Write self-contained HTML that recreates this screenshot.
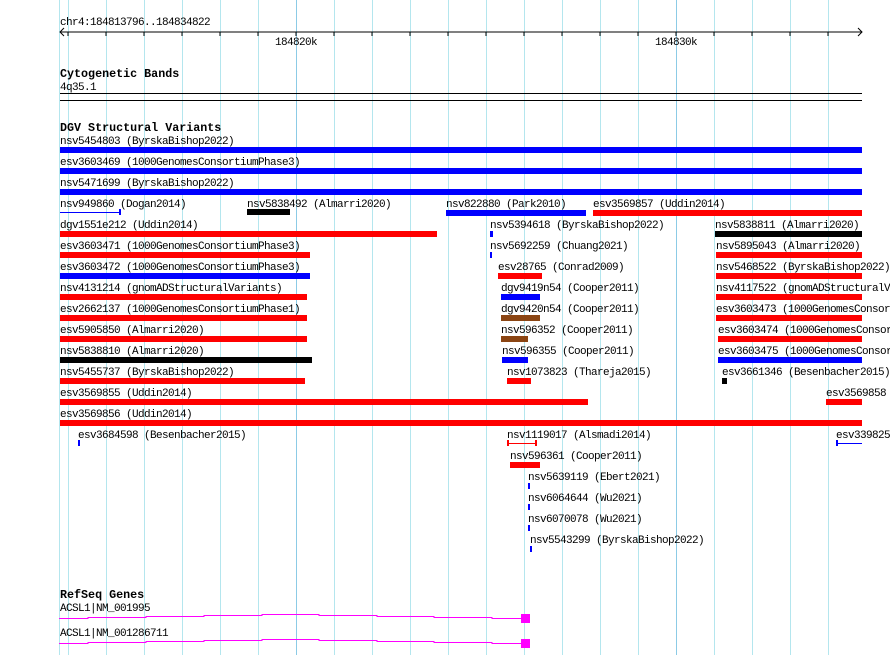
<!DOCTYPE html>
<html><head><meta charset="utf-8"><style>
body{margin:0;background:#fff;width:890px;height:655px;overflow:hidden;position:relative;font-family:"Liberation Mono",monospace;font-size:11px;color:#000}
.g{position:absolute;top:0;height:655px;width:1px;background:#b4e6ee}
.gd{background:#8ccbe6}
.t{position:absolute;line-height:10px;white-space:pre;letter-spacing:-0.6px;margin-top:2px;font-size:11px}
.h{position:absolute;font-family:"Liberation Mono",monospace;font-weight:bold;font-size:11.7px;line-height:11px;margin-top:1px}
.b{position:absolute;height:6px}
.R{background:#f00}.B{background:#00f}.K{background:#000}.N{background:#8b4513}
svg{shape-rendering:crispEdges}
</style></head><body>
<div class="g" style="left:59px"></div>
<div class="g" style="left:68px"></div><div class="g" style="left:106px"></div><div class="g" style="left:144px"></div><div class="g" style="left:182px"></div><div class="g" style="left:220px"></div><div class="g" style="left:258px"></div><div class="g gd" style="left:296px"></div><div class="g" style="left:334px"></div><div class="g" style="left:372px"></div><div class="g" style="left:410px"></div><div class="g" style="left:448px"></div><div class="g" style="left:486px"></div><div class="g" style="left:524px"></div><div class="g" style="left:562px"></div><div class="g" style="left:600px"></div><div class="g" style="left:638px"></div><div class="g gd" style="left:676px"></div><div class="g" style="left:714px"></div><div class="g" style="left:752px"></div><div class="g" style="left:790px"></div><div class="g" style="left:828px"></div>

<div class="t" style="left:60px;top:16px">chr4:184813796..184834822</div>
<svg style="position:absolute;left:0;top:0" width="890" height="110">
<line x1="60" y1="32" x2="862" y2="32" stroke="#000"/>
<path d="M64 28 L60 32 L64 36 M858 28 L862 32 L858 36" stroke="#000" fill="none" shape-rendering="auto"/>
<g stroke="#000"><path d="M68 32v4M106 32v4M144 32v4M182 32v4M220 32v4M258 32v4M296 32v4M334 32v4M372 32v4M410 32v4M448 32v4M486 32v4M524 32v4M562 32v4M600 32v4M638 32v4M676 32v4M714 32v4M752 32v4M790 32v4M828 32v4"/></g>
<rect x="60" y="93" width="802" height="1" fill="#000"/><rect x="60" y="100" width="802" height="1" fill="#000"/>
</svg>
<div class="t" style="left:275px;top:36px">184820k</div>
<div class="t" style="left:655px;top:36px">184830k</div>
<div class="h" style="left:60px;top:68px">Cytogenetic Bands</div>
<div class="t" style="left:60px;top:81px">4q35.1</div>
<div class="h" style="left:60px;top:122px">DGV Structural Variants</div>

<div class="t" style="left:60px;top:135px">nsv5454803 (ByrskaBishop2022)</div><div class="b B" style="left:60px;width:802px;top:147px"></div>
<div class="t" style="left:60px;top:156px">esv3603469 (1000GenomesConsortiumPhase3)</div><div class="b B" style="left:60px;width:802px;top:168px"></div>
<div class="t" style="left:60px;top:177px">nsv5471699 (ByrskaBishop2022)</div><div class="b B" style="left:60px;width:802px;top:189px"></div>

<div class="t" style="left:60px;top:198px">nsv949860 (Dogan2014)</div><div style="position:absolute;left:60px;width:60px;top:212px;height:1px;background:#00f"></div><div style="position:absolute;left:119px;width:2px;top:209px;height:6px;background:#00f"></div>
<div class="t" style="left:247px;top:198px">nsv5838492 (Almarri2020)</div><div class="b K" style="left:247px;width:43px;top:209px"></div>
<div class="t" style="left:446px;top:198px">nsv822880 (Park2010)</div><div class="b B" style="left:446px;width:140px;top:210px"></div>
<div class="t" style="left:593px;top:198px">esv3569857 (Uddin2014)</div><div class="b R" style="left:593px;width:269px;top:210px"></div>

<div class="t" style="left:60px;top:219px">dgv1551e212 (Uddin2014)</div><div class="b R" style="left:60px;width:377px;top:231px"></div>
<div class="t" style="left:490px;top:219px">nsv5394618 (ByrskaBishop2022)</div><div class="b B" style="left:490px;width:3px;top:231px"></div>
<div class="t" style="left:715px;top:219px">nsv5838811 (Almarri2020)</div><div class="b K" style="left:715px;width:147px;top:231px"></div>

<div class="t" style="left:60px;top:240px">esv3603471 (1000GenomesConsortiumPhase3)</div><div class="b R" style="left:60px;width:250px;top:252px"></div>
<div class="t" style="left:490px;top:240px">nsv5692259 (Chuang2021)</div><div class="b B" style="left:490px;width:2px;top:252px"></div>
<div class="t" style="left:716px;top:240px">nsv5895043 (Almarri2020)</div><div class="b R" style="left:716px;width:146px;top:252px"></div>

<div class="t" style="left:60px;top:261px">esv3603472 (1000GenomesConsortiumPhase3)</div><div class="b B" style="left:60px;width:250px;top:273px"></div>
<div class="t" style="left:498px;top:261px">esv28765 (Conrad2009)</div><div class="b R" style="left:498px;width:44px;top:273px"></div>
<div class="t" style="left:716px;top:261px">nsv5468522 (ByrskaBishop2022)</div><div class="b R" style="left:716px;width:146px;top:273px"></div>

<div class="t" style="left:60px;top:282px">nsv4131214 (gnomADStructuralVariants)</div><div class="b R" style="left:60px;width:247px;top:294px"></div>
<div class="t" style="left:501px;top:282px">dgv9419n54 (Cooper2011)</div><div class="b B" style="left:501px;width:39px;top:294px"></div>
<div class="t" style="left:716px;top:282px">nsv4117522 (gnomADStructuralV</div><div class="b R" style="left:716px;width:146px;top:294px"></div>

<div class="t" style="left:60px;top:303px">esv2662137 (1000GenomesConsortiumPhase1)</div><div class="b R" style="left:60px;width:247px;top:315px"></div>
<div class="t" style="left:501px;top:303px">dgv9420n54 (Cooper2011)</div><div class="b N" style="left:501px;width:39px;top:315px"></div>
<div class="t" style="left:716px;top:303px">esv3603473 (1000GenomesConsor</div><div class="b R" style="left:716px;width:146px;top:315px"></div>

<div class="t" style="left:60px;top:324px">esv5905850 (Almarri2020)</div><div class="b R" style="left:60px;width:247px;top:336px"></div>
<div class="t" style="left:501px;top:324px">nsv596352 (Cooper2011)</div><div class="b N" style="left:501px;width:27px;top:336px"></div>
<div class="t" style="left:718px;top:324px">esv3603474 (1000GenomesConsor</div><div class="b R" style="left:718px;width:144px;top:336px"></div>

<div class="t" style="left:60px;top:345px">nsv5838810 (Almarri2020)</div><div class="b K" style="left:60px;width:252px;top:357px"></div>
<div class="t" style="left:502px;top:345px">nsv596355 (Cooper2011)</div><div class="b B" style="left:502px;width:26px;top:357px"></div>
<div class="t" style="left:718px;top:345px">esv3603475 (1000GenomesConsor</div><div class="b B" style="left:718px;width:144px;top:357px"></div>

<div class="t" style="left:60px;top:366px">nsv5455737 (ByrskaBishop2022)</div><div class="b R" style="left:60px;width:245px;top:378px"></div>
<div class="t" style="left:507px;top:366px">nsv1073823 (Thareja2015)</div><div class="b R" style="left:507px;width:24px;top:378px"></div>
<div class="t" style="left:722px;top:366px">esv3661346 (Besenbacher2015)</div><div class="b K" style="left:722px;width:5px;top:378px"></div>

<div class="t" style="left:60px;top:387px">esv3569855 (Uddin2014)</div><div class="b R" style="left:60px;width:528px;top:399px"></div>
<div class="t" style="left:826px;top:387px">esv3569858</div><div class="b R" style="left:826px;width:36px;top:399px"></div>

<div class="t" style="left:60px;top:408px">esv3569856 (Uddin2014)</div><div class="b R" style="left:60px;width:802px;top:420px"></div>

<div class="t" style="left:78px;top:429px">esv3684598 (Besenbacher2015)</div><div class="b B" style="left:78px;width:2px;top:440px"></div>
<div class="t" style="left:507px;top:429px">nsv1119017 (Alsmadi2014)</div>
<div style="position:absolute;left:508px;width:27px;top:443px;height:1px;background:#f00"></div><div style="position:absolute;left:507px;width:2px;top:440px;height:6px;background:#f00"></div><div style="position:absolute;left:535px;width:2px;top:440px;height:6px;background:#f00"></div>
<div class="t" style="left:836px;top:429px">esv339825</div>
<div style="position:absolute;left:836px;width:26px;top:443px;height:1px;background:#00f"></div><div style="position:absolute;left:836px;width:2px;top:440px;height:6px;background:#00f"></div>

<div class="t" style="left:510px;top:450px">nsv596361 (Cooper2011)</div><div class="b R" style="left:510px;width:30px;top:462px"></div>
<div class="t" style="left:528px;top:471px">nsv5639119 (Ebert2021)</div><div class="b B" style="left:528px;width:2px;top:483px"></div>
<div class="t" style="left:528px;top:492px">nsv6064644 (Wu2021)</div><div class="b B" style="left:528px;width:2px;top:504px"></div>
<div class="t" style="left:528px;top:513px">nsv6070078 (Wu2021)</div><div class="b B" style="left:528px;width:2px;top:525px"></div>
<div class="t" style="left:530px;top:534px">nsv5543299 (ByrskaBishop2022)</div><div class="b B" style="left:530px;width:2px;top:546px"></div>

<div class="h" style="left:60px;top:589px">RefSeq Genes</div>
<div class="t" style="left:60px;top:602px">ACSL1|NM_001995</div>
<div class="t" style="left:60px;top:627px">ACSL1|NM_001286711</div>
<svg style="position:absolute;left:0;top:600px" width="890" height="55">
<polyline fill="none" stroke="#f0f" stroke-width="1" points="59,18.5 88,18.5 88,17.5 146,17.5 146,16.5 204,16.5 204,15.5 262,15.5 262,14.5 319,14.5 319,15.5 377,15.5 377,16.5 434,16.5 434,17.5 492,17.5 492,18.5 521,18.5"/>
<rect x="521" y="14" width="9" height="9" fill="#f0f"/>
<polyline fill="none" stroke="#f0f" stroke-width="1" points="59,43.5 88,43.5 88,42.5 146,42.5 146,41.5 204,41.5 204,40.5 262,40.5 262,39.5 319,39.5 319,40.5 377,40.5 377,41.5 434,41.5 434,42.5 492,42.5 492,43.5 521,43.5"/>
<rect x="521" y="39" width="9" height="9" fill="#f0f"/>
</svg>
</body></html>
